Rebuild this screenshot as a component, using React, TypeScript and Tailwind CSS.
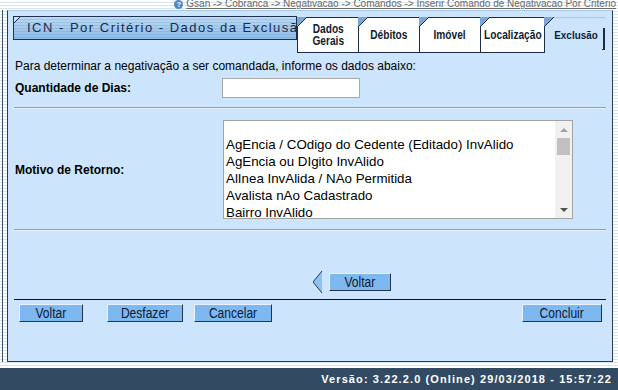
const stripes =
  "bg-[repeating-linear-gradient(180deg,#ffffff_0px,#ffffff_2px,#d5e3ef_2px,#d5e3ef_3px)]";

function TabCorner() {
  return (
    <svg className="absolute left-[-1px] top-[-1px]" width="10" height="10" viewBox="0 0 10 10">
      <polygon points="0,0 10,0 0,10" fill="#7aa6d8" />
      <line x1="10" y1="0" x2="0" y2="10" stroke="#1c2c46" strokeWidth="1" />
    </svg>
  );
}

function Tab({ children, w }: { children: React.ReactNode; w: string }) {
  return (
    <div
      className={`relative flex h-[36px] ${w} items-center justify-center border border-[#1c2c46] bg-white text-center text-[13px] font-bold leading-[12px] text-[#101c30]`}
    >
      <TabCorner />
      <span className="inline-block scale-x-[0.78] whitespace-nowrap">{children}</span>
    </div>
  );
}

function Btn({ label, w }: { label: string; w: string }) {
  return (
    <div
      className={`flex h-[18px] ${w} items-center justify-center border border-t-[#e6f2ff] border-l-[#e6f2ff] border-r-[#24344e] border-b-[#24344e] bg-[#7db8f1] text-[14px] leading-[16px] text-[#0d1a30]`}
    >
      <span className="inline-block scale-x-[0.86] whitespace-nowrap">{label}</span>
    </div>
  );
}

const motivos = [
  "AgEncia / COdigo do Cedente (Editado) InvAlido",
  "AgEncia ou DIgito InvAlido",
  "AlInea InvAlida / NAo Permitida",
  "Avalista nAo Cadastrado",
  "Bairro InvAlido",
];

export default function App() {
  return (
    <div className={`flex h-[390px] w-[618px] flex-col overflow-hidden ${stripes} font-['Liberation_Sans',Arial,sans-serif]`}>
      {/* breadcrumb */}
      <div className="flex h-[10px] items-start justify-end overflow-hidden pr-[2px]">
        <div className="mt-[-2px] flex items-center gap-[3px] text-[10px] leading-[12px] text-[#6a6a6a]">
          <span className="flex h-[9px] w-[9px] items-center justify-center rounded-full bg-[#4f86c6] text-[7px] font-bold leading-none text-white">
            ?
          </span>
          <span className="underline">
            Gsan -&gt; Cobranca -&gt; Negativacao -&gt; Comandos -&gt; Inserir Comando de Negativacao Por Criterio
          </span>
        </div>
      </div>

      {/* main row */}
      <div className="flex h-[352px]">
        <div className="w-[7px] pl-[2px]">
          <div className="h-full w-px bg-[#3a4d66]" />
        </div>
        <div className="flex w-[606px] flex-col border-b border-l border-r border-t border-[#2a3b54] border-t-[#a8c9ea] bg-[#cce5fc]">
          {/* header: banner + tabs */}
          <div className="flex h-[43px] items-start pt-[5px]">
            <div
              className={`relative ml-[5px] flex h-[24px] w-[284px] items-center overflow-hidden whitespace-nowrap border border-[#1f3150] bg-[linear-gradient(180deg,#bcdaf5,#8dbbe6)] pl-[13px] text-[13px] tracking-[1.5px] text-[#162a4c]`}
            >
              <div className="pointer-events-none absolute inset-0 bg-[repeating-linear-gradient(180deg,transparent_0px,transparent_2px,rgba(120,160,205,0.35)_2px,rgba(120,160,205,0.35)_3px)]" />
              <svg className="absolute left-[-1px] top-[-1px]" width="8" height="8" viewBox="0 0 8 8">
                <polygon points="0,0 7,0 0,7" fill="#cce5fc" />
                <line x1="7.5" y1="0.5" x2="0.5" y2="7.5" stroke="#1f3150" strokeWidth="1" />
              </svg>
              <span className="relative">ICN - Por Critério - Dados da Exclusão</span>
            </div>
            <div className="mt-[1px] flex">
              <Tab w="w-[62px]">
                Dados
                <br />
                Gerais
              </Tab>
              <Tab w="w-[62px] ml-[-1px]">Débitos</Tab>
              <Tab w="w-[62px] ml-[-1px]">Imóvel</Tab>
              <Tab w="w-[65px] ml-[-1px]">Localização</Tab>
              <div className="relative ml-[-1px] flex h-[36px] w-[62px] items-center justify-center border-t border-[#a8c9ea] text-[11px] font-bold text-[#101c30]">
                <svg className="absolute left-0 top-[-1px]" width="10" height="10" viewBox="0 0 10 10">
                  <polygon points="0,0 10,0 0,10" fill="#7aa6d8" />
                  <line x1="10" y1="0" x2="0" y2="10" stroke="#1c2c46" strokeWidth="1" />
                </svg>
                <span className="inline-block scale-x-[0.9] pl-[3px]">Exclusão</span>
                <div className="absolute right-[1px] top-[10px] h-[22px] w-[3px] border-r-2 border-b border-[#1c2c46]" />
              </div>
            </div>
          </div>

          {/* form */}
          <div className="mt-[5px] pl-[7px] text-[12px] leading-[14px] text-black">
            Para determinar a negativação a ser comandada, informe os dados abaixo:
          </div>
          <div className="mt-[5px] flex h-[20px] items-center pl-[7px]">
            <div className="w-[207px] text-[12px] font-bold text-black">Quantidade de Dias:</div>
            <div className="h-[20px] w-[138px] border border-[#a9a9a9] bg-white" />
          </div>
          <div className="mx-[6px] mt-[9px] border-t border-b border-t-[#9b9b9b] border-b-[#e9f3fd]" />

          <div className="mt-[11px] flex items-center pl-[7px]">
            <div className="w-[208px] text-[12px] font-bold text-black">Motivo de Retorno:</div>
            <div className="flex h-[99px] w-[350px] border border-[#a3a3a3] bg-white">
              <div className="flex-1 overflow-hidden pl-[2px] text-[13.33px] leading-[17px] text-black">
                <div className="h-[15px]" />
                {motivos.map((m) => (
                  <div key={m} className="h-[17px] whitespace-nowrap">
                    {m}
                  </div>
                ))}
              </div>
              <div className="flex w-[17px] flex-col items-center bg-[#f1f1f1]">
                <div className="flex h-[17px] items-center justify-center">
                  <div className="h-0 w-0 border-x-[4px] border-b-[4px] border-x-transparent border-b-[#a3a3a3]" />
                </div>
                <div className="h-[17px] w-[13px] bg-[#c1c1c1]" />
                <div className="flex-1" />
                <div className="flex h-[17px] items-center justify-center">
                  <div className="h-0 w-0 border-x-[4px] border-t-[4px] border-x-transparent border-t-[#505050]" />
                </div>
              </div>
            </div>
          </div>
          <div className="mx-[6px] mt-[10px] border-t border-b border-t-[#9b9b9b] border-b-[#e9f3fd]" />

          {/* back arrow */}
          <div className="mt-[40px] flex h-[22px] items-center pl-[305px]">
            <svg width="10" height="22" viewBox="0 0 10 22">
              <polygon points="9,0 9,22 0,11" fill="#8ec2f3" />
              <polyline points="9,0 0,11 9,22" fill="none" stroke="#26364f" strokeWidth="1" />
            </svg>
            <div className="ml-[6px]">
              <Btn label="Voltar" w="w-[62px]" />
            </div>
          </div>

          {/* bottom buttons */}
          <div className="mx-[6px] mt-[6px] border-t border-[#111]" />
          <div className="mt-[4px] flex pl-[11px] pr-[10px]">
            <Btn label="Voltar" w="w-[64px]" />
            <div className="ml-[24px]">
              <Btn label="Desfazer" w="w-[76px]" />
            </div>
            <div className="ml-[11px]">
              <Btn label="Cancelar" w="w-[78px]" />
            </div>
            <div className="ml-auto">
              <Btn label="Concluir" w="w-[80px]" />
            </div>
          </div>
        </div>
      </div>

      {/* footer */}
      <div className="mt-[6px] flex h-[22px] items-center justify-end bg-[#324a62] pr-[6px] text-[11px] font-bold tracking-[1.1px] text-white">
        Versão: 3.22.2.0 (Online) 29/03/2018 - 15:57:22
      </div>
    </div>
  );
}
